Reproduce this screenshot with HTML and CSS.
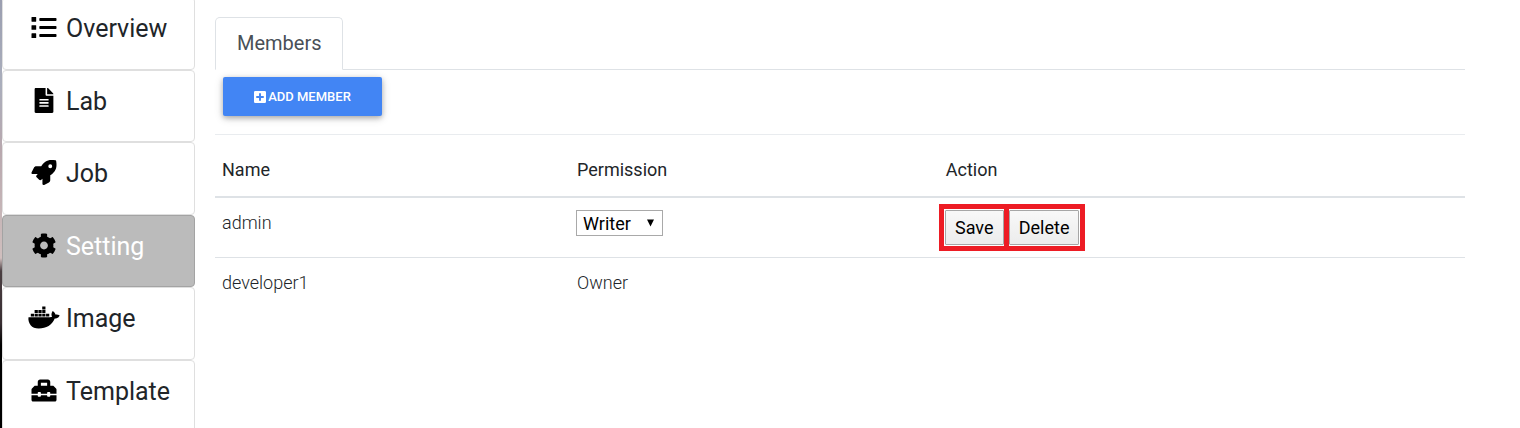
FILE: index.html
```html
<!DOCTYPE html>
<html lang="en">
<head>
<meta charset="utf-8">
<title>Members</title>
<link rel="stylesheet" href="styles.css">
</head>
<body>
<div class="page">
  <nav class="sidebar">
    <a class="nav-item" href="#overview"><svg class="icon" viewBox="0 0 512 512"><path d="M8 40h80q8 0 8 8v80q0 8-8 8H8q-8 0-8-8V48q0-8 8-8zm0 168h80q8 0 8 8v80q0 8-8 8H8q-8 0-8-8v-80q0-8 8-8zm0 168h80q8 0 8 8v80q0 8-8 8H8q-8 0-8-8v-80q0-8 8-8zM176 60h320q16 0 16 16v32q0 16-16 16H176q-16 0-16-16V76q0-16 16-16zm0 164h320q16 0 16 16v32q0 16-16 16H176q-16 0-16-16v-32q0-16 16-16zm0 164h320q16 0 16 16v32q0 16-16 16H176q-16 0-16-16v-32q0-16 16-16z"/></svg>Overview</a>
    <a class="nav-item" href="#lab"><svg class="icon" viewBox="0 0 384 512"><path d="M224 136V0H24C10.700 0 0 10.700 0 24v464c0 13.300 10.700 24 24 24h336c13.300 0 24-10.700 24-24V160H248c-13.200 0-24-10.800-24-24zm64 236c0 6.600-5.400 12-12 12H108c-6.600 0-12-5.400-12-12v-8c0-6.600 5.400-12 12-12h168c6.600 0 12 5.400 12 12v8zm0-64c0 6.600-5.400 12-12 12H108c-6.600 0-12-5.400-12-12v-8c0-6.600 5.400-12 12-12h168c6.600 0 12 5.400 12 12v8zm0-72v8c0 6.600-5.400 12-12 12H108c-6.600 0-12-5.400-12-12v-8c0-6.600 5.400-12 12-12h168c6.600 0 12 5.400 12 12zm96-114.100v6.100H256V0h6.100c6.400 0 12.500 2.500 17 7l97.900 98c4.500 4.500 7 10.600 7 16.900z"/></svg>Lab</a>
    <a class="nav-item" href="#job"><svg class="icon" viewBox="0 0 512 512"><path d="M505.120 19.094c-1.189-5.531-6.658-11-12.207-12.188C460.716 0 435.507 0 410.407 0 307.175 0 245.269 55.203 199.052 128H94.838c-16.348.016-35.557 11.875-42.887 26.484L2.516 253.297A28.400 28.400 0 0 0 0 264a24 24 0 0 0 24 24h103.816l-22.474 22.469c-11.365 11.361-12.996 32.258 0 45.250L156.246 406.625c11.156 11.188 32.156 13.156 45.277 0l22.475-22.469V488a24 24 0 0 0 24 24 28.560 28.560 0 0 0 10.707-2.516l98.728-49.390c14.629-7.297 26.508-26.500 26.508-42.860V312.797c72.598-46.313 128.035-108.406 128.035-211.094C512.075 76.500 512.075 51.297 505.120 19.094ZM384.040 168A40 40 0 1 1 424.050 128 40 40 0 0 1 384.040 168Z"/></svg>Job</a>
    <a class="nav-item active" href="#setting" aria-current="page"><svg class="icon" viewBox="0 0 512 512"><path d="M487.400 315.700l-42.600-24.600c4.300-23.200 4.300-47 0-70.200l42.600-24.600c4.900-2.800 7.100-8.600 5.500-14-11.100-35.600-30-67.800-54.700-94.600-3.800-4.100-10-5.100-14.800-2.300L380.800 110c-17.900-15.400-38.500-27.300-60.800-35.100V25.800c0-5.600-3.900-10.500-9.400-11.700-36.700-8.200-74.300-7.800-109.200 0-5.500 1.200-9.400 6.100-9.400 11.700V75c-22.200 7.900-42.800 19.800-60.800 35.100L88.700 85.500c-4.900-2.800-11-1.900-14.800 2.300-24.700 26.700-43.600 58.900-54.700 94.600-1.700 5.400.6 11.200 5.500 14L67.300 221c-4.300 23.200-4.300 47 0 70.200l-42.600 24.600c-4.900 2.800-7.100 8.600-5.500 14 11.100 35.600 30 67.800 54.700 94.600 3.800 4.100 10 5.100 14.800 2.300l42.600-24.600c17.900 15.400 38.500 27.300 60.800 35.100v49.200c0 5.600 3.900 10.500 9.400 11.700 36.700 8.200 74.300 7.800 109.200 0 5.500-1.200 9.400-6.100 9.400-11.700v-49.200c22.200-7.900 42.800-19.800 60.800-35.100l42.600 24.600c4.900 2.800 11 1.900 14.800-2.300 24.700-26.700 43.600-58.900 54.700-94.600 1.500-5.500-.7-11.300-5.600-14.100zM256 336c-44.100 0-80-35.900-80-80s35.900-80 80-80 80 35.900 80 80-35.900 80-80 80z"/></svg>Setting</a>
    <a class="nav-item" href="#image"><svg class="icon" viewBox="0 0 640 512"><path d="M349.900 236.300h-66.100v-59.400h66.100v59.400zm0-204.300h-66.100v60.700h66.100V32zm78.200 144.800H362v59.400h66.100v-59.400zm-156.300-72.100h-66.100v60.100h66.100v-60.100zm78.100 0h-66.100v60.100h66.100v-60.100zm276.800 100c-14.400-9.700-47.600-13.200-73.100-8.400-3.300-24-16.700-44.900-41.100-63.700l-14-9.300-9.300 14c-18.400 27.800-23.400 73.600-3.700 103.800-8.700 4.700-25.800 11.100-48.400 10.700H2.400c-8.700 50.800 5.800 116.800 44 162.100 37.100 43.900 92.700 66.200 165.400 66.200 157.400 0 273.900-72.500 328.400-204.200 21.400.4 67.600.1 91.300-45.200 1.500-2.500 6.600-13.200 8.500-17.100l-13.300-8.900zm-511.100-27.900h-66v59.400h66.100v-59.400zm78.100 0h-66.100v59.400h66.100v-59.400zm78.100 0h-66.100v59.400h66.100v-59.400zm-78.100-72.100h-66.100v60.100h66.100v-60.100z"/></svg>Image</a>
    <a class="nav-item" href="#template"><svg class="icon" viewBox="0 0 512 512"><path d="M502.630 214.630l-45.250-45.250c-6-6-14.140-9.370-22.630-9.370H384V80c0-26.510-21.490-48-48-48H176c-26.510 0-48 21.490-48 48v80H77.250c-8.490 0-16.620 3.370-22.630 9.370L9.370 214.630c-6 6-9.370 14.140-9.370 22.630V320h128v-16c0-8.840 7.160-16 16-16h32c8.840 0 16 7.160 16 16v16h128v-16c0-8.840 7.160-16 16-16h32c8.840 0 16 7.160 16 16v16h128v-82.750c0-8.480-3.370-16.620-9.370-22.620zM320 160H192V96h128v64zm64 208c0 8.840-7.160 16-16 16h-32c-8.840 0-16-7.160-16-16v-16H192v16c0 8.840-7.160 16-16 16h-32c-8.840 0-16-7.160-16-16v-16H0v96c0 17.670 14.330 32 32 32h448c17.670 0 32-14.330 32-32v-96H384v16z"/></svg>Template</a>
  </nav>
  <main class="content">
    <div class="tabs"><a class="tab" href="#members">Members</a></div>
    <div class="toolbar">
      <button class="add-button" type="button"><svg class="plus" viewBox="0 0 448 448"><path fill-rule="evenodd" d="M48 0h352q48 0 48 48v352q0 48-48 48H48q-48 0-48-48V48Q0 0 48 0zm140 84v104H84v72h104v104h72V260h104v-72H260V84z"/></svg>ADD MEMBER</button>
    </div>
    <table class="members">
      <thead>
        <tr><th class="col-name" scope="col">Name</th><th class="col-permission" scope="col">Permission</th><th scope="col">Action</th></tr>
      </thead>
      <tbody>
        <tr>
          <td>admin</td>
          <td class="select-cell">
            <div class="select-wrap">
              <select class="permission" aria-label="Permission for admin"><option>Writer</option><option>Owner</option></select>
              <svg class="arrow" viewBox="0 0 8 8"><path d="M0 0h8L4 8z"/></svg>
            </div>
          </td>
          <td class="actions-cell">
            <div class="actions">
              <span class="mark"><button class="action" type="button">Save</button></span>
              <span class="mark"><button class="action" type="button">Delete</button></span>
            </div>
          </td>
        </tr>
        <tr><td>developer1</td><td>Owner</td><td></td></tr>
      </tbody>
    </table>
  </main>
</div>
</body>
</html>
```
FILE: styles.css
```css
* {
  box-sizing: border-box;
}

body {
  margin: 0;
  height: 100vh;
  overflow: hidden;
  background: #fff;
  color: #212529;
  font-family: Roboto, "Liberation Sans", sans-serif;
  font-size: 18px;
  font-weight: 300;
}

.page {
  display: flex;
  min-height: 100vh;
}

.sidebar {
  display: grid;
  grid-template-rows: repeat(6, 1fr);
  flex: none;
  width: 196px;
  height: 435px;
  margin-top: -3px;
  padding: 0 1px 0 2px;
  background: linear-gradient(#9a9eb0, #aaaebc 20%, #b8a8ae 35%, #d0bfbe 60%, #4b3f42 63%, #382e32 75%, #000 80%) left / 2px 100% no-repeat;
}

.nav-item {
  display: flex;
  align-items: flex-start;
  gap: 6px;
  padding: 15px 0 0 25px;
  border: 1px solid #dfdfdf;
  border-radius: 4px;
  color: #212529;
  font-size: 25px;
  font-weight: 400;
  line-height: 32px;
  text-decoration: none;
}

.nav-item.active {
  background: #bbb;
  border-color: #a3a3a3;
  color: #fff;
}

.icon {
  flex: none;
  width: 32px;
  height: 25px;
  margin-top: 2px;
  fill: #000;
}

.content {
  flex: 1;
  margin: 17px 55px 0 19px;
}

.tabs {
  display: flex;
  border-bottom: 1px solid #dee2e6;
}

.tab {
  margin-bottom: -1px;
  padding: 10px 20px 10px 21px;
  border: 1px solid #dee2e6;
  border-bottom-color: #fff;
  border-radius: 5px 5px 0 0;
  background: #fff;
  color: #495057;
  font-size: 20px;
  font-weight: 400;
  line-height: 31px;
  text-decoration: none;
}

.toolbar {
  padding: 7px 8px 18px;
  border-bottom: 1px solid #e9ecef;
}

.add-button {
  display: flex;
  align-items: center;
  justify-content: center;
  gap: 2px;
  width: 159px;
  height: 39px;
  border: 0;
  border-radius: 2px;
  background: #4285f4;
  box-shadow: 0 2px 5px rgba(0, 0, 0, 0.24), 0 2px 10px rgba(0, 0, 0, 0.16);
  color: #fff;
  font-family: inherit;
  font-size: 13px;
  font-weight: 500;
}

.plus {
  width: 12px;
  height: 12px;
  fill: #fff;
}

.members {
  width: 100%;
  border-collapse: collapse;
  table-layout: fixed;
}

.col-name {
  width: 28.4%;
}

.col-permission {
  width: 29.5%;
}

.members th {
  padding: 21px 7px 13px;
  border-bottom: 2px solid #dee2e6;
  font-weight: 400;
  line-height: 27px;
  text-align: left;
}

.members td {
  height: 60px;
  padding: 11px 7px;
  border-bottom: 1px solid #dee2e6;
  line-height: 27px;
  vertical-align: top;
}

.members tr:last-child td {
  border-bottom: 0;
}

.members .select-cell {
  padding: 12px 6px;
}

.select-wrap {
  position: relative;
  width: 87px;
}

.permission {
  display: block;
  width: 100%;
  height: 26px;
  padding: 0 6px;
  border: 1px solid #a9a9a9;
  border-radius: 0;
  appearance: none;
  background: #fff;
  color: #000;
  font-family: inherit;
  font-size: 18px;
  font-weight: 400;
}

.arrow {
  position: absolute;
  top: 9px;
  right: 9px;
  width: 7px;
  height: 8px;
  pointer-events: none;
}

.members .actions-cell {
  padding: 6px 0;
}

.actions {
  display: flex;
}

.mark {
  padding: 1px;
  border: 5px solid #ed1c24;
}

.mark + .mark {
  margin-left: -5px;
  padding-left: 0;
}

.mark:first-child {
  padding-right: 0;
}

.action {
  display: block;
  min-width: 59px;
  height: 35px;
  padding: 0 9px;
  border: 1px solid #a6a6a6;
  border-radius: 1px;
  background: linear-gradient(#f8f8f8, #ececec);
  color: #000;
  font-family: inherit;
  font-size: 18px;
  font-weight: 400;
}
```
